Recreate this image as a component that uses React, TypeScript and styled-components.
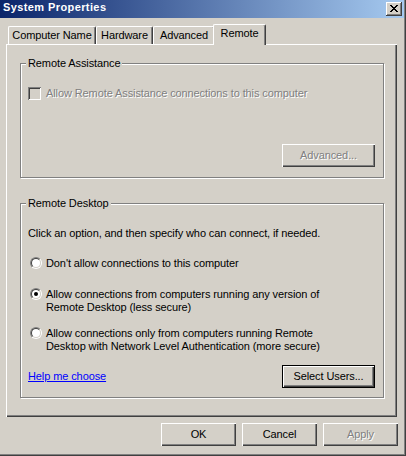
import React from "react";
import styled, { createGlobalStyle } from "styled-components";

const FACE = "#D4D0C8";
const LIGHT = "#FFFFFF";
const SHADOW = "#808080";
const DARK = "#404040";

const GlobalStyle = createGlobalStyle`
  * { box-sizing: border-box; }
  html, body { margin: 0; padding: 0; background: ${FACE}; }
  body {
    font-family: "Liberation Sans", Arial, sans-serif;
    font-size: 11px;
    line-height: 13px;
    letter-spacing: -0.1px;
    color: #000;
  }
`;

const Window = styled.div`
  width: 406px;
  height: 456px;
  padding: 0 2px 2px 0;
  background: ${FACE};
  box-shadow: inset -1px -1px 0 ${DARK}, inset -2px -2px 0 ${SHADOW};
  display: flex;
  flex-direction: column;
  overflow: hidden;
`;

const TitleBar = styled.div`
  height: 18px;
  flex: none;
  display: flex;
  align-items: flex-start;
  justify-content: space-between;
  padding: 1px 2px 0 3px;
  background: linear-gradient(to right, #0a246a, #a6caf0);
`;

const Title = styled.span`
  color: #fff;
  font-weight: bold;
  font-size: 11px;
  letter-spacing: 0.4px;
`;

const CaptionButton = styled.button`
  width: 16px;
  height: 14px;
  margin: 1px 0 0;
  padding: 0 1px 1px 0;
  border: none;
  background: ${FACE};
  box-shadow: inset -1px -1px 0 ${DARK}, inset 1px 1px 0 ${LIGHT},
    inset -2px -2px 0 ${SHADOW};
  display: flex;
  align-items: center;
  justify-content: center;
`;

const Body = styled.div`
  flex: 1;
  display: flex;
  flex-direction: column;
  padding: 6px 7px 0 6px;
`;

const TabStrip = styled.div`
  flex: none;
  height: 20px;
  display: flex;
  align-items: flex-end;
  padding-left: 2px;
`;

const Tab = styled.div<{ $active?: boolean; $width: number }>`
  position: relative;
  z-index: ${(p) => (p.$active ? 2 : 0)};
  width: ${(p) => p.$width}px;
  height: ${(p) => (p.$active ? 21 : 18)}px;
  margin: 0 ${(p) => (p.$active ? -2 : 0)}px ${(p) => (p.$active ? -1 : 0)}px;
  padding-top: 2px;
  text-align: center;
  white-space: nowrap;
  background: ${FACE};
  border-top: 1px solid ${LIGHT};
  border-left: 1px solid ${LIGHT};
  border-right: 1px solid ${DARK};
  border-radius: 2px 2px 0 0;
  box-shadow: inset -1px 0 0 ${SHADOW};
`;

const Panel = styled.div`
  flex: none;
  height: 373px;
  background: ${FACE};
  box-shadow: inset 1px 1px 0 ${LIGHT}, inset -1px -1px 0 ${DARK},
    inset -2px -2px 0 ${SHADOW};
  padding: 19px 13px 0 14px;
  display: flex;
  flex-direction: column;
`;

const GroupBox = styled.div<{ $height: number; $top?: number; $pb: number }>`
  position: relative;
  flex: none;
  height: ${(p) => p.$height}px;
  margin-top: ${(p) => p.$top ?? 0}px;
  border: 1px solid ${SHADOW};
  box-shadow: 1px 1px 0 ${LIGHT}, inset 1px 1px 0 ${LIGHT};
  padding: 23px 8px ${(p) => p.$pb}px 7px;
  display: flex;
  flex-direction: column;
`;

const GroupLabel = styled.span`
  position: absolute;
  top: -7px;
  left: 5px;
  padding: 0 2px;
  background: ${FACE};
  white-space: nowrap;
`;

const CheckRow = styled.div`
  display: flex;
  align-items: center;
  gap: 5px;
`;

const CheckBox = styled.span`
  width: 13px;
  height: 13px;
  flex: none;
  background: ${FACE};
  box-shadow: inset 1px 1px 0 ${SHADOW}, inset -1px -1px 0 ${LIGHT},
    inset 2px 2px 0 ${DARK}, inset -2px -2px 0 ${FACE};
`;

const DisabledText = styled.span`
  color: ${SHADOW};
  text-shadow: 1px 1px 0 ${LIGHT};
  white-space: nowrap;
`;

const ButtonRow = styled.div`
  margin-top: auto;
  display: flex;
  align-items: center;
  justify-content: space-between;
`;

const PushButton = styled.button<{ $width?: number; $default?: boolean }>`
  width: ${(p) => p.$width ?? 75}px;
  height: 23px;
  margin: 0 0 0 auto;
  padding: 0 0 1px;
  border: none;
  font: inherit;
  line-height: 13px;
  letter-spacing: inherit;
  color: #000;
  background: ${FACE};
  box-shadow: ${(p) =>
    p.$default
      ? `inset 0 0 0 1px #000, inset 2px 2px 0 ${LIGHT}, inset -2px -2px 0 ${DARK}, inset -3px -3px 0 ${SHADOW}`
      : `inset 1px 1px 0 ${LIGHT}, inset -1px -1px 0 ${DARK}, inset -2px -2px 0 ${SHADOW}`};
  &:disabled {
    color: ${SHADOW};
    text-shadow: 1px 1px 0 ${LIGHT};
  }
`;

const Intro = styled.div`
  white-space: nowrap;
`;

const Option = styled.label<{ $top: number }>`
  display: flex;
  align-items: flex-start;
  gap: 4px;
  margin-top: ${(p) => p.$top}px;
  white-space: nowrap;
`;

const Radio = styled.span<{ $checked?: boolean }>`
  position: relative;
  flex: none;
  width: 12px;
  height: 12px;
  margin-left: 2px;
  border-radius: 50%;
  border: 1px solid;
  border-color: ${SHADOW} ${LIGHT} ${LIGHT} ${SHADOW};
  &::before {
    content: "";
    position: absolute;
    inset: 0;
    border-radius: 50%;
    border: 1px solid;
    border-color: ${DARK} ${FACE} ${FACE} ${DARK};
    background: #fff;
  }
  &::after {
    content: "";
    display: ${(p) => (p.$checked ? "block" : "none")};
    position: absolute;
    left: 3px;
    top: 3px;
    width: 4px;
    height: 4px;
    border-radius: 50%;
    background: #000;
  }
`;

const Link = styled.a`
  color: #0000ff;
  text-decoration: underline;
  cursor: pointer;
`;

const Footer = styled.div`
  flex: none;
  display: flex;
  justify-content: flex-end;
  gap: 6px;
  margin: 6px -1px 0 0;
`;

const FooterButton = styled(PushButton)`
  margin: 0;
`;

const CloseGlyph = () => (
  <svg width="8" height="7" viewBox="0 0 8 7" shapeRendering="crispEdges">
    <path
      d="M0 0h2v1h-2zM6 0h2v1h-2zM1 1h2v1h-2zM5 1h2v1h-2zM2 2h4v1h-4zM3 3h2v1h-2zM2 4h4v1h-4zM1 5h2v1h-2zM5 5h2v1h-2zM0 6h2v1h-2zM6 6h2v1h-2z"
      fill="#000"
    />
  </svg>
);

const tabs = [
  { label: "Computer Name", width: 88 },
  { label: "Hardware", width: 57 },
  { label: "Advanced", width: 62 },
  { label: "Remote", width: 53, active: true },
];

export default function App() {
  return (
    <>
      <GlobalStyle />
      <Window>
        <TitleBar>
          <Title>System Properties</Title>
          <CaptionButton aria-label="Close">
            <CloseGlyph />
          </CaptionButton>
        </TitleBar>
        <Body>
          <TabStrip>
            {tabs.map((t) => (
              <Tab key={t.label} $width={t.width} $active={t.active}>
                {t.label}
              </Tab>
            ))}
          </TabStrip>
          <Panel>
            <GroupBox $height={115} $pb={10}>
              <GroupLabel>Remote Assistance</GroupLabel>
              <CheckRow>
                <CheckBox />
                <DisabledText>
                  Allow Remote Assistance connections to this computer
                </DisabledText>
              </CheckRow>
              <ButtonRow>
                <PushButton $width={93} disabled>
                  Advanced...
                </PushButton>
              </ButtonRow>
            </GroupBox>
            <GroupBox $height={195} $top={25} $pb={9}>
              <GroupLabel>Remote Desktop</GroupLabel>
              <Intro>
                Click an option, and then specify who can connect, if needed.
              </Intro>
              <Option $top={17}>
                <Radio />
                <span>Don't allow connections to this computer</span>
              </Option>
              <Option $top={18}>
                <Radio $checked />
                <span>
                  Allow connections from computers running any version of
                  <br />
                  Remote Desktop (less secure)
                </span>
              </Option>
              <Option $top={13}>
                <Radio />
                <span>
                  Allow connections only from computers running Remote
                  <br />
                  Desktop with Network Level Authentication (more secure)
                </span>
              </Option>
              <ButtonRow>
                <Link>Help me choose</Link>
                <PushButton $width={93} $default>
                  Select Users...
                </PushButton>
              </ButtonRow>
            </GroupBox>
          </Panel>
          <Footer>
            <FooterButton>OK</FooterButton>
            <FooterButton>Cancel</FooterButton>
            <FooterButton disabled>Apply</FooterButton>
          </Footer>
        </Body>
      </Window>
    </>
  );
}
